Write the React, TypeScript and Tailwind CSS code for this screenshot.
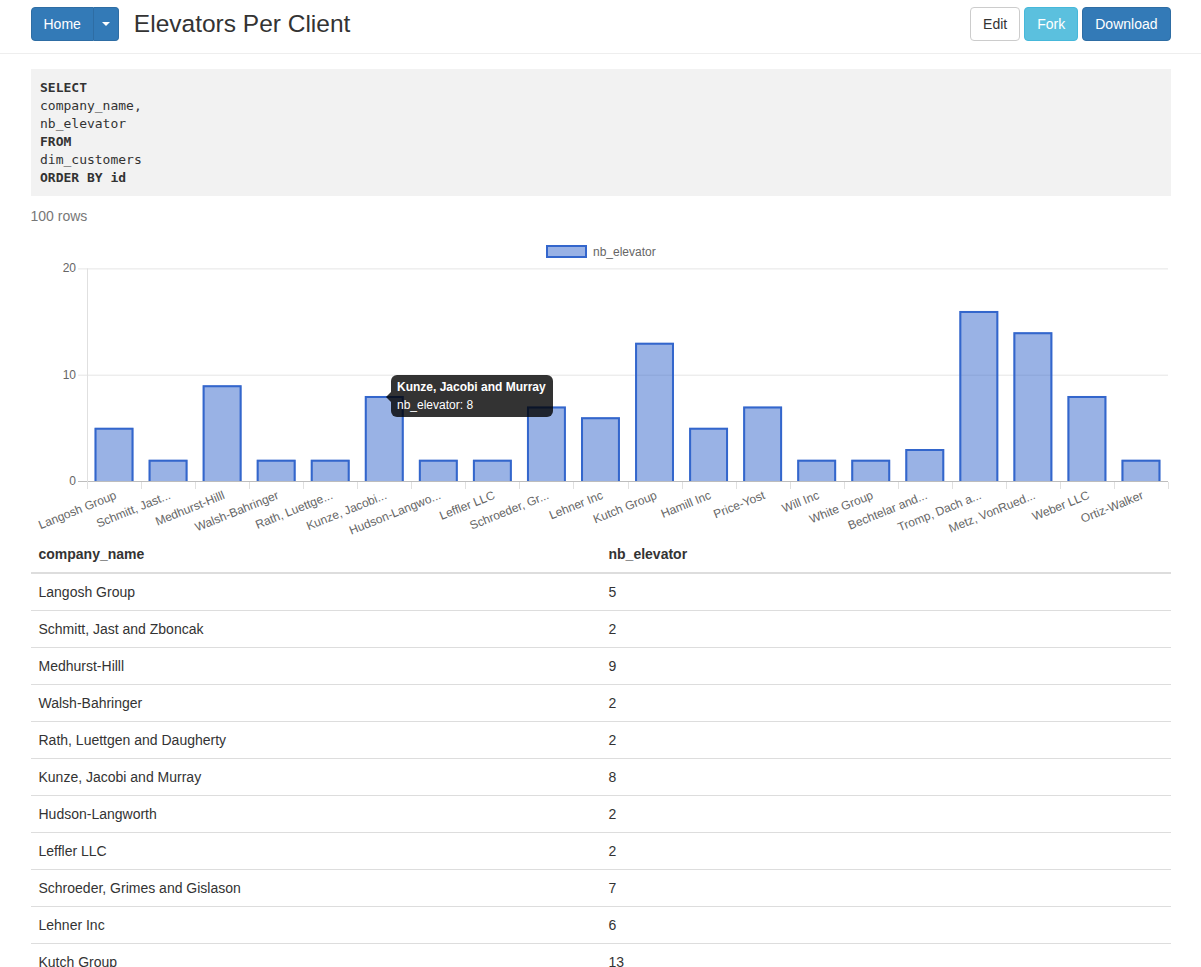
import React from "react";

const rows: [string, string, number][] = [
  ["Langosh Group", "Langosh Group", 5],
  ["Schmitt, Jast and Zboncak", "Schmitt, Jast...", 2],
  ["Medhurst-Hilll", "Medhurst-Hilll", 9],
  ["Walsh-Bahringer", "Walsh-Bahringer", 2],
  ["Rath, Luettgen and Daugherty", "Rath, Luettge...", 2],
  ["Kunze, Jacobi and Murray", "Kunze, Jacobi...", 8],
  ["Hudson-Langworth", "Hudson-Langwo...", 2],
  ["Leffler LLC", "Leffler LLC", 2],
  ["Schroeder, Grimes and Gislason", "Schroeder, Gr...", 7],
  ["Lehner Inc", "Lehner Inc", 6],
  ["Kutch Group", "Kutch Group", 13],
  ["Hamill Inc", "Hamill Inc", 5],
  ["Price-Yost", "Price-Yost", 7],
  ["Will Inc", "Will Inc", 2],
  ["White Group", "White Group", 2],
  ["Bechtelar and Sons", "Bechtelar and...", 3],
  ["Tromp, Dach and Hane", "Tromp, Dach a...", 16],
  ["Metz, VonRueden and Kuhn", "Metz, VonRued...", 14],
  ["Weber LLC", "Weber LLC", 8],
  ["Ortiz-Walker", "Ortiz-Walker", 2],
];

// plot geometry, in page pixels
const left = 87;
const right = 1168;
const zeroY = 481;
const unit = 10.63;
const cat = (right - left) / rows.length;

const Chart = () => {
  return (
    <svg width={1140} height={310} viewBox="31 226 1140 310" className="block" style={{ fontFamily: "'Liberation Sans', Arial, sans-serif" }}>
      {/* legend */}
      <rect x={547} y={246} width={39} height={11} fill="#3366cc" fillOpacity={0.5} stroke="#3366cc" strokeWidth={2} />
      <text x={593} y={256} fontSize={12} fill="#666">nb_elevator</text>

      {/* grid */}
      {[20, 10].map((v) => (
        <line key={v} x1={78} x2={right} y1={zeroY - v * unit + 0.5} y2={zeroY - v * unit + 0.5} stroke="#e5e5e5" strokeWidth={1} />
      ))}
      <line x1={78} x2={right} y1={zeroY + 0.5} y2={zeroY + 0.5} stroke="#bdbdbd" strokeWidth={1} />
      <line x1={left + 0.5} x2={left + 0.5} y1={zeroY - 20 * unit} y2={zeroY + 8} stroke="#e0e0e0" strokeWidth={1} />
      {rows.map((_, i) => (
        <line key={i} x1={Math.round(left + (i + 1) * cat) + 0.5} x2={Math.round(left + (i + 1) * cat) + 0.5} y1={zeroY + 1} y2={zeroY + 8} stroke="#e0e0e0" strokeWidth={1} />
      ))}
      {[20, 10, 0].map((v) => (
        <text key={v} x={76} y={zeroY - v * unit + 4} fontSize={12} fill="#666" textAnchor="end">
          {v}
        </text>
      ))}

      {/* bars */}
      {rows.map(([, , v], i) => {
        const w = cat * 0.72;
        const x = left + i * cat + (cat - w) / 2;
        const h = v * unit;
        return (
          <g key={i}>
            <rect x={x} y={zeroY - h} width={w} height={h} fill="#3366cc" fillOpacity={0.5} />
            <path d={`M${x + 1} ${zeroY} V${zeroY - h + 1} H${x + w - 1} V${zeroY}`} fill="none" stroke="#3366cc" strokeWidth={2} />
          </g>
        );
      })}

      {/* x labels */}
      {rows.map(([, label], i) => {
        const cx = left + i * cat + cat / 2;
        return (
          <text key={i} x={cx} y={490} fontSize={12} fill="#666" textAnchor="end" dominantBaseline="hanging" transform={`rotate(-22 ${cx} 490)`}>
            {label}
          </text>
        );
      })}

      {/* tooltip */}
      <g>
        <rect x={391} y={375} width={162} height={42} rx={6} fill="#000" fillOpacity={0.8} />
        <path d="M386 397 L391 392 L391 402 Z" fill="#000" fillOpacity={0.8} />
        <text x={397} y={391} fontSize={12} fontWeight={700} fill="#fff">Kunze, Jacobi and Murray</text>
        <text x={397} y={409} fontSize={12} fill="#fff">nb_elevator: 8</text>
      </g>
    </svg>
  );
};

const App = () => {
  return (
    <div className="min-h-screen bg-white text-[14px] leading-5 text-[#333]" style={{ fontFamily: "'Liberation Sans', Arial, sans-serif" }}>
      <div className="border-b border-[#eee] pt-[7px] pb-[12px]">
        <div className="mx-auto flex max-w-[1170px] items-center justify-between px-[15px]">
          <div className="flex items-center">
            <div className="flex">
              <button className="rounded-l-[4px] border border-[#2e6da4] bg-[#337ab7] px-3 py-[6px] text-white">Home</button>
              <button className="flex items-center rounded-r-[4px] border border-l-0 border-[#2e6da4] bg-[#337ab7] px-2 py-[6px]">
                <span className="h-0 w-0 border-x-[4px] border-t-[4px] border-x-transparent border-t-white" />
              </button>
            </div>
            <h3 className="ml-[15px] text-[24.5px] leading-[1.1] text-[#333]">Elevators Per Client</h3>
          </div>
          <div className="flex gap-1">
            <button className="rounded-[4px] border border-[#ccc] bg-white px-3 py-[6px] text-[#333]">Edit</button>
            <button className="rounded-[4px] border border-[#46b8da] bg-[#5bc0de] px-3 py-[6px] text-white">Fork</button>
            <button className="rounded-[4px] border border-[#2e6da4] bg-[#337ab7] px-3 py-[6px] text-white">Download</button>
          </div>
        </div>
      </div>

      <div className="mx-auto max-w-[1170px] px-[15px]">
        <pre className="mt-[15px] bg-[#f2f2f2] p-[9.5px] text-[13px] leading-[18px] text-[#333]" style={{ fontFamily: "'DejaVu Sans Mono', 'Liberation Mono', monospace" }}>
          <b>SELECT</b>
          {"\ncompany_name,\nnb_elevator\n"}
          <b>FROM</b>
          {"\ndim_customers\n"}
          <b>ORDER BY id</b>
        </pre>
        <p className="mt-[10px] text-[#777]">100 rows</p>

        <Chart />

        <table className="w-full border-collapse">
          <thead>
            <tr>
              <th className="w-1/2 border-b-2 border-[#ddd] p-2 text-left font-bold">company_name</th>
              <th className="w-1/2 border-b-2 border-[#ddd] p-2 text-left font-bold">nb_elevator</th>
            </tr>
          </thead>
          <tbody>
            {rows.map(([name, , v]) => (
              <tr key={name}>
                <td className="border-t border-[#ddd] p-2">{name}</td>
                <td className="border-t border-[#ddd] p-2">{v}</td>
              </tr>
            ))}
          </tbody>
        </table>
      </div>
    </div>
  );
};

export default App;
